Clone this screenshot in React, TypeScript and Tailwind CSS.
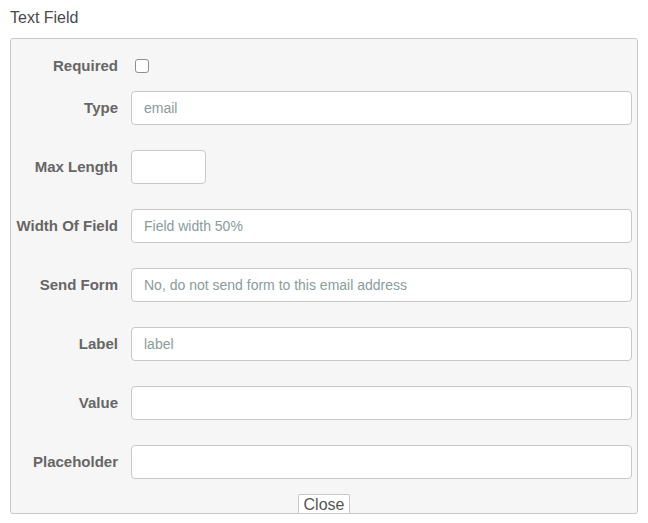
import React from "react";

const rows: { label: string; placeholder?: string; short?: boolean }[] = [
  { label: "Type", placeholder: "email" },
  { label: "Max Length", short: true },
  { label: "Width Of Field", placeholder: "Field width 50%" },
  { label: "Send Form", placeholder: "No, do not send form to this email address" },
  { label: "Label", placeholder: "label" },
  { label: "Value" },
  { label: "Placeholder" },
];

const font = { fontFamily: '"Liberation Sans", Arial, sans-serif' };

export default function App() {
  return (
    <div className="w-[648px] h-[523px] bg-white px-[10px] pt-[8px]" style={font}>
      <div className="text-[16px] leading-[20px] text-[#4a4a4a] mb-[10px]">Text Field</div>
      <div className="w-[628px] h-[476px] border border-[#c8c8c8] rounded-[3px] bg-[#f6f6f6] flex flex-col pt-[10px]">
        <div className="flex items-center h-[34px] pr-[5px]">
          <div className="w-[107px] text-right text-[15px] font-bold text-[#666]">Required</div>
          <input
            type="checkbox"
            className="appearance-none ml-[17px] w-[14px] h-[14px] border border-[#8f8f8f] rounded-[3px] bg-white"
          />
        </div>
        <div className="flex flex-col gap-[25px] mt-[8px] pr-[5px]">
          {rows.map((r) => (
            <div key={r.label} className="flex items-center h-[34px]">
              <div className="w-[107px] text-right text-[15px] font-bold text-[#666] whitespace-nowrap">
                {r.label}
              </div>
              <input
                type="text"
                placeholder={r.placeholder}
                className={`ml-[13px] h-[34px] border border-[#c8c8c8] rounded-[4px] bg-white px-[12px] text-[14px] outline-none placeholder:text-[#8a9c9b] ${
                  r.short ? "w-[75px]" : "flex-1"
                }`}
                style={font}
              />
            </div>
          ))}
        </div>
        <div className="flex-1" />
        <div className="flex justify-center">
          <button
            className="h-[19px] px-[5px] bg-white border border-b-0 border-[#c8c8c8] rounded-t-[2px] text-[16px] leading-[19px] text-[#555]"
            style={font}
          >
            Close
          </button>
        </div>
      </div>
    </div>
  );
}
